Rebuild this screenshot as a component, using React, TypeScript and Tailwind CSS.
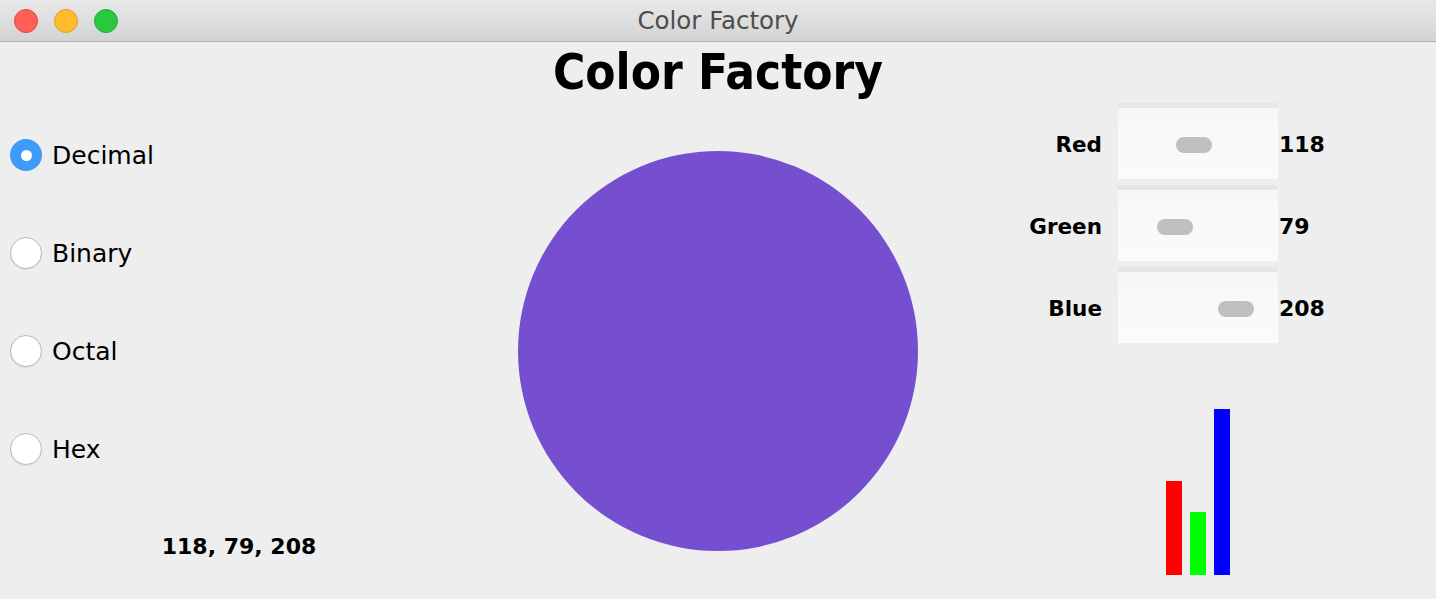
import React from "react";

const radios = [
  { label: "Decimal", checked: true },
  { label: "Binary", checked: false },
  { label: "Octal", checked: false },
  { label: "Hex", checked: false },
];

const sliders = [
  { name: "Red", v: 118 },
  { name: "Green", v: 79 },
  { name: "Blue", v: 208 },
];

const bars = [
  { v: 118, cls: "bg-[#ff0000]" },
  { v: 79, cls: "bg-[#00ff00]" },
  { v: 208, cls: "bg-[#0000ff]" },
];

export default function App() {
  return (
    <div className="w-[1436px] h-[599px] bg-[#eeeeee] flex flex-col overflow-hidden font-['DejaVu_Sans',sans-serif] text-black">
      {/* Title bar */}
      <div className="relative h-[42px] shrink-0 flex items-center justify-center bg-gradient-to-b from-[#e9e9e9] to-[#d3d3d3] border-b border-[#b1b1b1]">
        <div className="absolute left-[14px] top-[9px] flex gap-[16px]">
          <div className="w-[24px] h-[24px] rounded-full bg-[#fe5f57] border border-[#e2463f]" />
          <div className="w-[24px] h-[24px] rounded-full bg-[#febc2e] border border-[#dfa023]" />
          <div className="w-[24px] h-[24px] rounded-full bg-[#28c840] border border-[#1dac2c]" />
        </div>
        <span className="pt-[2px] text-[24.5px] text-[#4d4d4d] leading-none">Color Factory</span>
      </div>

      {/* Heading */}
      <div className="h-[61px] shrink-0 flex items-center justify-center">
        <h1 className="font-['DejaVu_Sans_Condensed','DejaVu_Sans',sans-serif] [font-stretch:condensed] text-[49px] font-bold leading-none">
          Color Factory
        </h1>
      </div>

      {/* Main */}
      <div className="flex flex-1">
        {/* Left: radios */}
        <div className="w-[478px] flex flex-col pt-[3px]">
          {radios.map((r) => (
            <div key={r.label} className="h-[98px] flex items-center pl-[10px] gap-[10px]">
              {r.checked ? (
                <div className="w-[32px] h-[32px] rounded-full bg-[#3e9bfa] flex items-center justify-center">
                  <div className="w-[11px] h-[11px] rounded-full bg-white" />
                </div>
              ) : (
                <div className="w-[32px] h-[32px] rounded-full bg-white border border-[#b9b9b9] shadow-[0_1px_1px_rgba(0,0,0,0.08)]" />
              )}
              <span className="text-[25px] leading-none">{r.label}</span>
            </div>
          ))}
          <div className="h-[96px] flex items-center justify-center">
            <span className="text-[22px] font-bold">118, 79, 208</span>
          </div>
        </div>

        {/* Center: color circle */}
        <div className="flex-1 flex items-center justify-center">
          <div className="w-[400px] h-[400px] rounded-full bg-[#764fd0]" />
        </div>

        {/* Right: sliders + bars */}
        <div className="w-[478px] flex flex-col">
          {sliders.map((s) => (
            <div key={s.name} className="h-[76px] mb-[6px] flex">
              <div className="w-[144px] pt-[30px] text-right text-[21.5px] font-bold leading-[24px]">
                {s.name}
              </div>
              <div className="ml-[16px] relative w-[160px] h-[76px] border-t-[5px] border-[#e6e6e6] bg-gradient-to-b from-[#f7f7f7] via-[#f9f9f9] to-[#fbfbfb]">
                <div
                  className="absolute top-[29px] w-[36px] h-[16px] rounded-full bg-[#c0c0c0]"
                  style={{ left: Math.round(2 + s.v * 0.473) }}
                />
              </div>
              <div className="ml-[1px] pt-[30px] text-[22px] font-bold leading-[24px]">{s.v}</div>
            </div>
          ))}
          <div className="h-[232px] flex items-end gap-[8px] pl-[208px] -mt-[6px]">
            {bars.map((b, i) => (
              <div key={i} className={`w-[16px] ${b.cls}`} style={{ height: Math.round(b.v * 0.8) }} />
            ))}
          </div>
        </div>
      </div>
    </div>
  );
}
